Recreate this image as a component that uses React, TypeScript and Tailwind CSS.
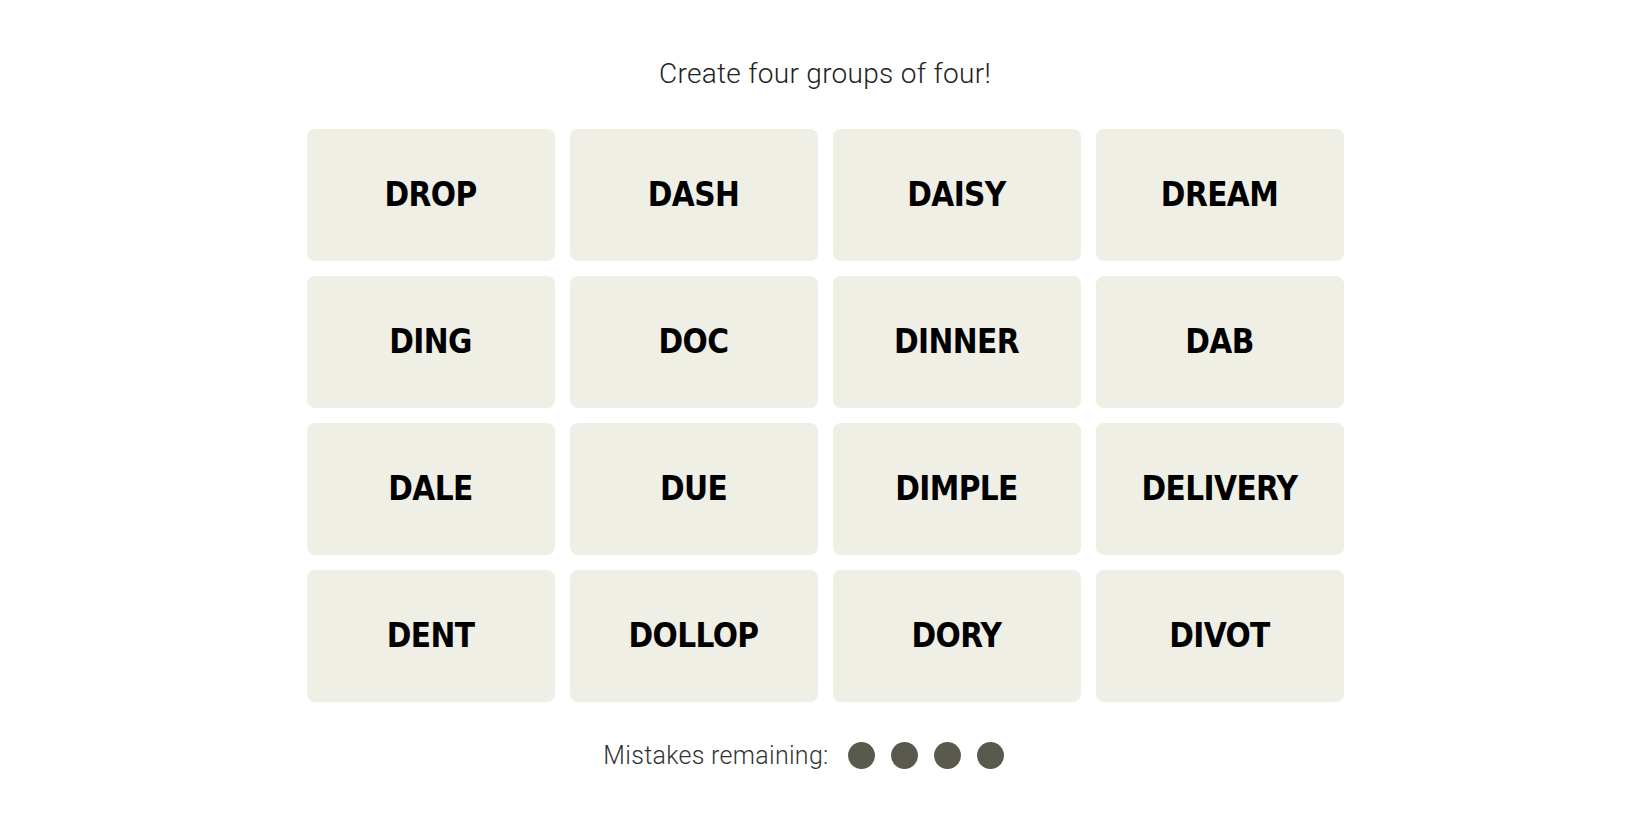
import React from "react";

const words = [
  "DROP", "DASH", "DAISY", "DREAM",
  "DING", "DOC", "DINNER", "DAB",
  "DALE", "DUE", "DIMPLE", "DELIVERY",
  "DENT", "DOLLOP", "DORY", "DIVOT",
];

export default function App() {
  return (
    <div className="w-[1650px] h-[825px] bg-white flex flex-col items-center pt-[58px]">
      <p
        className="text-[28px] leading-[32px] text-[#222] font-light tracking-[0.3px]"
        style={{ fontFamily: "Roboto, 'Liberation Sans', sans-serif" }}
      >
        Create four groups of four!
      </p>
      <div className="mt-[39px] grid grid-cols-[repeat(4,248px)] grid-rows-[repeat(4,132px)] gap-[15px]">
        {words.map((w) => (
          <div
            key={w}
            className="bg-[#efefe6] rounded-[8px] flex items-center justify-center"
          >
            <span
              className="text-[33px] font-bold text-black tracking-[-0.6px]"
              style={{ fontFamily: "'Liberation Sans Narrow', 'DejaVu Sans Condensed', sans-serif" }}
            >
              {w}
            </span>
          </div>
        ))}
      </div>
      <div className="mt-[40px] mr-[43px] flex items-center h-[27px]">
        <span
          className="text-[25px] leading-[27px] text-[#333] font-light tracking-[0.3px]"
          style={{ fontFamily: "Roboto, 'Liberation Sans', sans-serif" }}
        >
          Mistakes remaining:
        </span>
        <div className="ml-[19px] flex gap-[16px]">
          {[0, 1, 2, 3].map((i) => (
            <span key={i} className="w-[27px] h-[27px] rounded-full bg-[#5a594e]" />
          ))}
        </div>
      </div>
    </div>
  );
}
